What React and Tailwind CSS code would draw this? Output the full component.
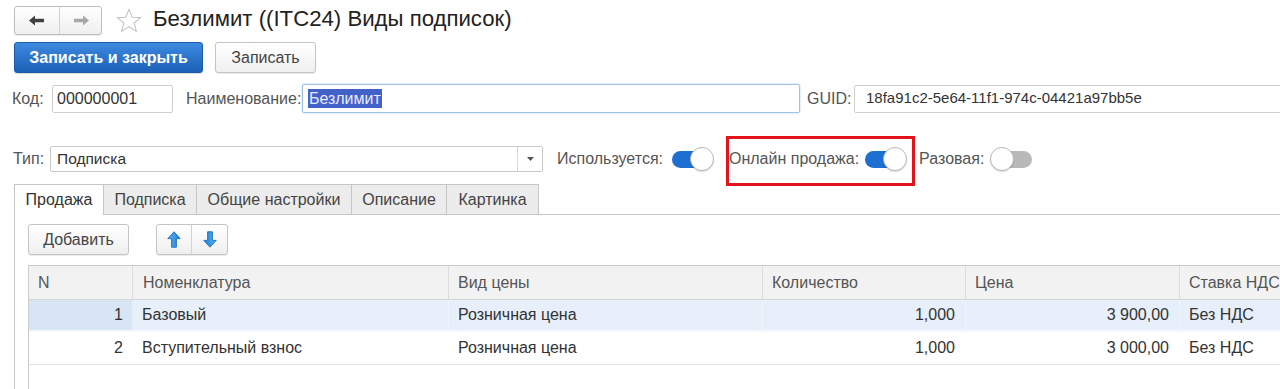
import React from "react";

function Toggle({ on }) {
  if (on) {
    return (
      <div className="relative w-[42px] h-[26px] flex items-center shrink-0">
        <div className="w-[38px] h-[17px] rounded-full bg-[#1d6fd0]" />
        <div className="absolute right-0 top-[1px] w-[24px] h-[24px] rounded-full bg-white border border-[#b8b8b8] shadow-[0_1px_1px_rgba(0,0,0,0.15)]" />
      </div>
    );
  }
  return (
    <div className="relative w-[42px] h-[26px] flex items-center justify-end shrink-0">
      <div className="w-[38px] h-[17px] rounded-full bg-[#b9b9b9]" />
      <div className="absolute left-0 top-[1px] w-[24px] h-[24px] rounded-full bg-white border border-[#b8b8b8] shadow-[0_1px_1px_rgba(0,0,0,0.15)]" />
    </div>
  );
}

function ArrowLeft({ color }) {
  return (
    <svg width="16" height="11" viewBox="0 0 16 11">
      <path d="M0 5.5 L6 0.5 L6 3.8 L15 3.8 L15 7.2 L6 7.2 L6 10.5 Z" fill={color} />
    </svg>
  );
}
function ArrowRight({ color }) {
  return (
    <svg width="16" height="11" viewBox="0 0 16 11">
      <path d="M16 5.5 L10 0.5 L10 3.8 L1 3.8 L1 7.2 L10 7.2 L10 10.5 Z" fill={color} />
    </svg>
  );
}

function BlueArrow({ down }) {
  return (
    <svg width="14" height="17" viewBox="0 0 14 17" className={down ? "rotate-180" : ""}>
      <defs>
        <linearGradient id={down ? "gd" : "gu"} x1="0" y1="0" x2="1" y2="0">
          <stop offset="0" stopColor="#5bb4f0" />
          <stop offset="1" stopColor="#1d7fd6" />
        </linearGradient>
      </defs>
      <path
        d="M7 0.8 L13.2 7.6 L9.4 7.6 L9.4 16.2 L4.6 16.2 L4.6 7.6 L0.8 7.6 Z"
        fill={`url(#${down ? "gd" : "gu"})`}
        stroke="#1b6cc0"
        strokeWidth="0.9"
        strokeLinejoin="round"
      />
    </svg>
  );
}

const cols = "grid grid-cols-[103px_316px_314px_203px_214px_160px]";

export default function App() {
  return (
    <div
      className="w-[1280px] h-[389px] overflow-hidden bg-white text-[#333] relative"
      style={{ fontFamily: '"Liberation Sans", Arial, sans-serif' }}
    >
      {/* Row 1 */}
      <div className="flex items-center h-[37px] pl-[14px] pt-[3px]">
        <div className="shrink-0 flex h-[29px] w-[88px] rounded-[3px] border border-[#bdbdbd] bg-gradient-to-b from-white to-[#efefef] shadow-[0_1px_1px_rgba(0,0,0,0.08)]">
          <div className="w-[45px] flex items-center justify-center border-r border-[#d2d2d2]">
            <ArrowLeft color="#404040" />
          </div>
          <div className="flex-1 flex items-center justify-center">
            <ArrowRight color="#a8a8a8" />
          </div>
        </div>
        <div className="shrink-0 ml-[14px] w-[26px] h-[26px] flex items-center justify-center">
          <svg width="26" height="25" viewBox="0 0 26 25">
            <path
              d="M13 1.2 L16.2 9.2 L24.8 9.6 L18.1 15 L20.4 23.4 L13 18.7 L5.6 23.4 L7.9 15 L1.2 9.6 L9.8 9.2 Z"
              fill="white"
              stroke="#c4c4c4"
              strokeWidth="1.1"
              strokeLinejoin="round"
            />
          </svg>
        </div>
        <div className="ml-[11px] -mt-[2px] text-[22.2px] text-[#222] leading-none whitespace-nowrap">
          Безлимит ((ITC24) Виды подписок)
        </div>
      </div>

      {/* Row 2 */}
      <div className="flex items-center pl-[14px] mt-[5px] gap-[12px]">
        <div className="shrink-0 h-[31px] w-[189px] flex items-center justify-center rounded-[3px] border border-[#1b5aa8] bg-gradient-to-b from-[#3c8ae0] to-[#1c61b8] text-white font-bold text-[16px] shadow-[0_1px_1px_rgba(0,0,0,0.15)]">
          Записать и закрыть
        </div>
        <div className="shrink-0 h-[31px] w-[101px] flex items-center justify-center rounded-[3px] border border-[#c4c4c4] bg-gradient-to-b from-white to-[#f0f0f0] text-[#444] text-[16px] shadow-[0_1px_1px_rgba(0,0,0,0.08)]">
          Записать
        </div>
      </div>

      {/* Row 3 */}
      <div className="flex items-center mt-[11px] h-[29px] text-[16px] whitespace-nowrap">
        <div className="shrink-0 pl-[12px] w-[52px] text-[#555]">Код:</div>
        <div className="shrink-0 w-[121px] h-[28px] border border-[#cfcfcf] rounded-[2px] flex items-center pl-[4px] text-[#333]">
          000000001
        </div>
        <div className="shrink-0 ml-[13px] w-[116px] text-[#555]">Наименование:</div>
        <div className="shrink-0 w-[498px] h-[29px] border border-[#9ec3ea] shadow-[0_0_2px_rgba(90,150,220,0.5)] rounded-[2px] flex items-center pl-[5px]">
          <span className="bg-[#4261c9] text-[#e8ecff] px-[1px] leading-[19px]">Безлимит</span>
        </div>
        <div className="shrink-0 ml-[7px] w-[47px] text-[#555]">GUID:</div>
        <div className="shrink-0 w-[440px] h-[28px] border border-[#cfcfcf] rounded-[2px] flex items-center pl-[11px] text-[#333] text-[15px]">
          18fa91c2-5e64-11f1-974c-04421a97bb5e
        </div>
      </div>

      {/* Row 4 */}
      <div className="flex items-start mt-[33px] h-[26px] text-[16px] whitespace-nowrap">
        <div className="shrink-0 pl-[13px] w-[50px] h-[26px] flex items-center text-[#555]">Тип:</div>
        <div className="shrink-0 w-[493px] h-[26px] border border-[#c9c9c9] rounded-[2px] flex items-center text-[15.5px]">
          <div className="flex-1 pl-[6px] text-[#333]">Подписка</div>
          <div className="w-[25px] h-full border-l border-[#d6d6d6] flex items-center justify-center">
            <svg width="7" height="4" viewBox="0 0 7 4">
              <path d="M0 0 L7 0 L3.5 4 Z" fill="#555" />
            </svg>
          </div>
        </div>
        <div className="shrink-0 ml-[14px] h-[26px] flex items-center text-[#555]">Используется:</div>
        <div className="shrink-0 ml-[9px]">
          <Toggle on />
        </div>
        <div className="shrink-0 ml-[12px] -mt-[10px] -mb-[24px] h-[50px] border-[3px] border-[#e3131b] pt-[7px] pr-[5px] flex items-start">
          <div className="h-[26px] flex items-center text-[#555]">Онлайн продажа:</div>
          <div className="ml-[6px]">
            <Toggle on />
          </div>
        </div>
        <div className="shrink-0 ml-[4px] h-[26px] flex items-center text-[#555]">Разовая:</div>
        <div className="shrink-0 ml-[6px]">
          <Toggle on={false} />
        </div>
      </div>

      {/* Tabs */}
      <div className="flex mt-[12px] pl-[14px] h-[31px] text-[16px] whitespace-nowrap">
        <div className="shrink-0 w-[90px] h-[31px] border border-[#c6c6c6] border-b-0 bg-white flex items-center justify-center text-[#333] relative z-10">
          Продажа
        </div>
        <div className="flex flex-1 border-b border-[#c6c6c6]">
          <div className="shrink-0 w-[93px] h-[30px] border border-l-0 border-b-0 border-[#c6c6c6] bg-[#ececec] flex items-center justify-center text-[#444]">
            Подписка
          </div>
          <div className="shrink-0 w-[155px] h-[30px] border border-l-0 border-b-0 border-[#c6c6c6] bg-[#ececec] flex items-center justify-center text-[#444]">
            Общие настройки
          </div>
          <div className="shrink-0 w-[95px] h-[30px] border border-l-0 border-b-0 border-[#c6c6c6] bg-[#ececec] flex items-center justify-center text-[#444]">
            Описание
          </div>
          <div className="shrink-0 w-[92px] h-[30px] border border-l-0 border-b-0 border-[#c6c6c6] bg-[#ececec] flex items-center justify-center text-[#444]">
            Картинка
          </div>
        </div>
      </div>

      {/* Panel */}
      <div className="ml-[14px] border-l border-[#c6c6c6] pl-[13px] pt-[9px] h-[200px]">
        <div className="flex items-center gap-[27px]">
          <div className="shrink-0 w-[101px] h-[31px] rounded-[3px] border border-[#c4c4c4] bg-gradient-to-b from-white to-[#efefef] flex items-center justify-center text-[16px] text-[#444] shadow-[0_1px_1px_rgba(0,0,0,0.08)]">
            Добавить
          </div>
          <div className="shrink-0 flex w-[72px] h-[31px] rounded-[3px] border border-[#c4c4c4] bg-gradient-to-b from-white to-[#efefef] shadow-[0_1px_1px_rgba(0,0,0,0.08)]">
            <div className="w-[35px] flex items-center justify-center border-r border-[#d2d2d2]">
              <BlueArrow />
            </div>
            <div className="flex-1 flex items-center justify-center">
              <BlueArrow down />
            </div>
          </div>
        </div>

        {/* Table */}
        <div className="mt-[10px] w-[1320px] border-l border-t border-[#cbcbcb] h-[140px] text-[16px] whitespace-nowrap">
          <div className={`${cols} h-[34px] bg-[#f2f2f2] border-b border-[#d6d6d6] text-[#555]`}>
            <div className="pl-[9px] flex items-center">N</div>
            <div className="pl-[10px] flex items-center border-l border-[#dcdcdc]">Номенклатура</div>
            <div className="pl-[9px] flex items-center border-l border-[#dcdcdc]">Вид цены</div>
            <div className="pl-[9px] flex items-center border-l border-[#dcdcdc]">Количество</div>
            <div className="pl-[9px] flex items-center border-l border-[#dcdcdc]">Цена</div>
            <div className="pl-[9px] flex items-center border-l border-[#dcdcdc]">Ставка НДС</div>
          </div>
          <div className={`${cols} h-[32px] bg-[#e7effa] border-b-[2px] border-[#f4f7fb] text-[#333]`}>
            <div className="pr-[9px] flex items-center justify-end bg-[#d7e5f5]">1</div>
            <div className="pl-[10px] flex items-center">Базовый</div>
            <div className="pl-[9px] flex items-center border-l border-[#f0f5fc]">Розничная цена</div>
            <div className="pr-[10px] flex items-center justify-end border-l border-[#f0f5fc]">1,000</div>
            <div className="pr-[10px] flex items-center justify-end border-l border-[#f0f5fc]">3 900,00</div>
            <div className="pl-[9px] flex items-center border-l border-[#f0f5fc]">Без НДС</div>
          </div>
          <div className={`${cols} h-[33px] bg-white border-b border-[#e2e2e2] text-[#333]`}>
            <div className="pr-[9px] flex items-center justify-end">2</div>
            <div className="pl-[10px] flex items-center">Вступительный взнос</div>
            <div className="pl-[10px] flex items-center">Розничная цена</div>
            <div className="pr-[10px] flex items-center justify-end">1,000</div>
            <div className="pr-[10px] flex items-center justify-end">3 000,00</div>
            <div className="pl-[10px] flex items-center">Без НДС</div>
          </div>
        </div>
      </div>
    </div>
  );
}
